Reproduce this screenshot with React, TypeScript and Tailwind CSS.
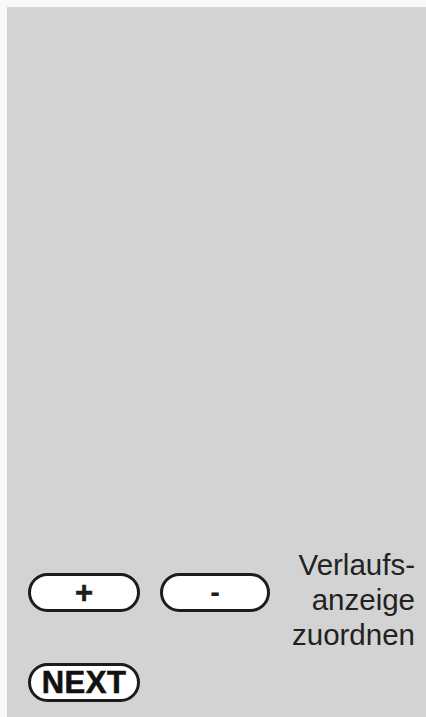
const pill =
  'flex h-[39px] items-center justify-center rounded-full border-[3px] border-[#1c1c1c] bg-white text-[#1c1c1c]'

export default function App() {
  return (
    <div className="h-[717px] w-[426px] bg-[#f8f8f8] pl-[7px] pt-[7px] font-['Liberation_Sans',Arial,sans-serif]">
      <div className="flex h-full flex-col justify-end bg-[#d3d3d3]">
        {/* controls row */}
        <div className="flex items-start pl-[21px] pr-[11px]">
          <div className="mt-[26px] flex gap-[20px]">
            <button className={`${pill} w-[112px] text-[31px] font-bold leading-none [-webkit-text-stroke:0.5px]`}>+</button>
            <button className={`${pill} w-[110px] text-[29px] font-bold leading-none`}>-</button>
          </div>
          <p className="ml-auto text-right text-[29.5px] leading-[35px] text-[#222]">
            Verlaufs-
            <br />
            anzeige
            <br />
            zuordnen
          </p>
        </div>

        {/* next */}
        <div className="mt-[11px] pb-[15px] pl-[21px]">
          <button className={`${pill} w-[112px] text-[31px] font-bold leading-none tracking-[0.5px] text-[#111] [-webkit-text-stroke:0.6px]`}>
            NEXT
          </button>
        </div>
      </div>
    </div>
  )
}
